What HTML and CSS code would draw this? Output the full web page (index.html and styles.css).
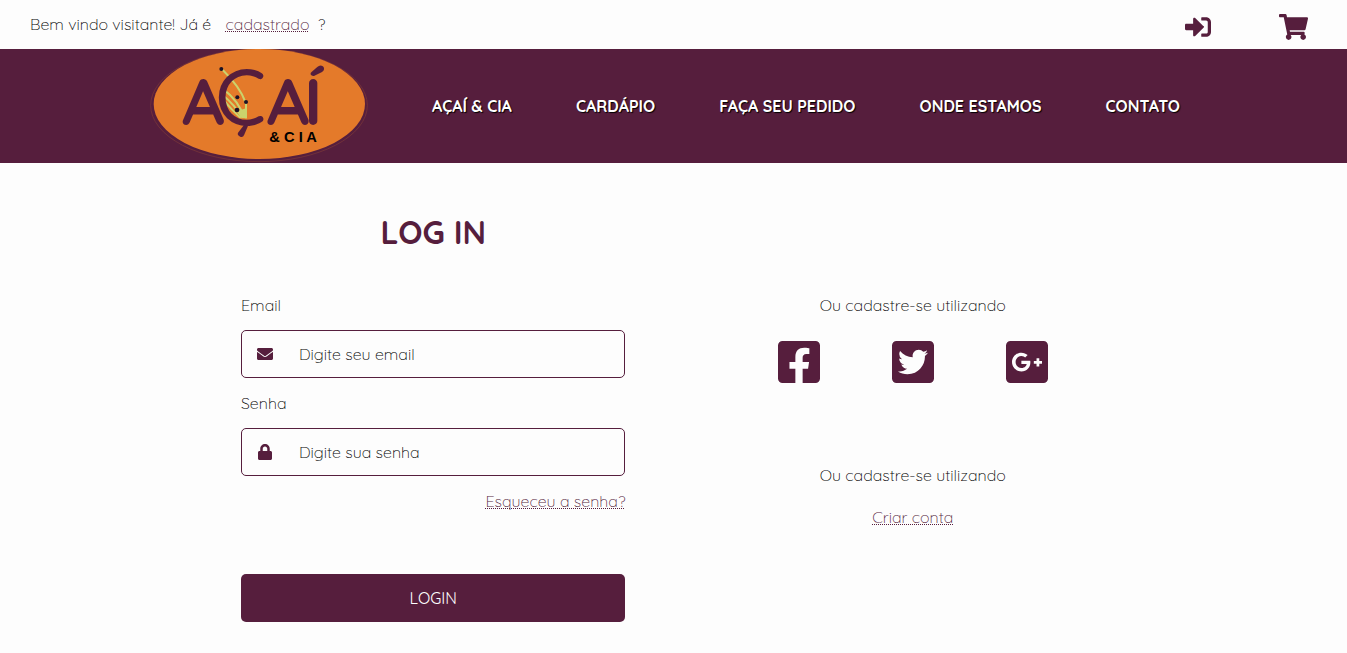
FILE: index.html
```html
<!DOCTYPE html>
<html lang="pt-BR">
<head>
<meta charset="utf-8">
<meta name="viewport" content="width=device-width, initial-scale=1">
<title>Açaí &amp; Cia - Log in</title>
<link rel="stylesheet" href="styles.css">
</head>
<body>
<div class="topbar">
  <p class="welcome">Bem vindo visitante! Já é <a class="link" href="#">cadastrado</a> ?</p>
  <div class="actions">
    <a href="#" aria-label="Entrar"><svg class="icon" viewBox="0 0 512 512"><path d="M416 448h-84c-6.600 0-12-5.400-12-12v-40c0-6.600 5.400-12 12-12h84c17.700 0 32-14.300 32-32V160c0-17.700-14.300-32-32-32h-84c-6.600 0-12-5.400-12-12V76c0-6.600 5.400-12 12-12h84c53 0 96 43 96 96v192c0 53-43 96-96 96zm-47-201L201 79c-15-15-41-4.500-41 17v96H24c-13.300 0-24 10.700-24 24v80c0 13.300 10.700 24 24 24h136v96c0 21.500 26 32 41 17l168-168c9.300-9.400 9.300-24.600 0-34z"/></svg></a>
    <a href="#" aria-label="Carrinho"><svg class="icon icon-cart" viewBox="0 0 576 512"><path d="M528.120 301.319l47.273-208C578.806 78.301 567.391 64 551.990 64H159.208l-9.166-44.810C147.758 8.021 137.930 0 126.529 0H24C10.745 0 0 10.745 0 24v16c0 13.255 10.745 24 24 24h69.883l70.248 343.435C147.325 417.100 136 435.222 136 456c0 30.928 25.072 56 56 56s56-25.072 56-56c0-15.674-6.447-29.835-16.824-40h209.647C430.447 426.165 424 440.326 424 456c0 30.928 25.072 56 56 56s56-25.072 56-56c0-22.172-12.888-41.332-31.579-50.405l5.517-24.276c3.413-15.018-8.002-29.319-23.403-29.319H218.117l-6.545-32h293.145c11.206 0 20.920-7.754 23.403-18.681z"/></svg></a>
  </div>
</div>
<header class="header">
  <div class="header-inner">
    <a class="brand" href="#" aria-label="Açaí &amp; Cia">
      <svg class="logo" viewBox="30 27 654 342">
        <ellipse class="logo-ring" cx="357" cy="196" rx="325" ry="169"/>
        <ellipse class="logo-oval" cx="358" cy="192" rx="317" ry="165"/>
        <path class="logo-strands" d="M246 88Q300 140 318 190V234M247 145Q300 185 312 234M247 164Q285 195 308 234M252 182Q275 210 302 234"/>
        <path class="logo-leaf" d="M290 214L318 205L320 236Q302 236 290 214Z"/>
        <text class="logo-name" y="256"><tspan x="126">A</tspan><tspan class="logo-c" x="226" y="254">Ç</tspan><tspan x="380" y="256">A</tspan><tspan x="492">Í</tspan></text>
        <g class="logo-dots"><circle cx="244" cy="87" r="6"/><circle cx="292" cy="172" r="6"/><circle cx="318" cy="186" r="6"/><circle cx="291" cy="210" r="7"/></g>
        <text class="logo-sub" x="388" y="306">&amp; C I A</text>
      </svg>
    </a>
    <nav class="nav">
      <a href="#">AÇAÍ &amp; CIA</a>
      <a href="#">CARDÁPIO</a>
      <a href="#">FAÇA SEU PEDIDO</a>
      <a href="#">ONDE ESTAMOS</a>
      <a href="#">CONTATO</a>
    </nav>
  </div>
</header>
<main class="main">
  <form class="login">
    <h1 class="title">LOG IN</h1>
    <label for="email">Email</label>
    <div class="field">
      <svg class="field-icon" viewBox="0 0 512 512"><path d="M502.300 190.800c3.900-3.100 9.700-.2 9.700 4.700V400c0 26.500-21.500 48-48 48H48c-26.500 0-48-21.500-48-48V195.600c0-5 5.700-7.800 9.700-4.700 22.400 17.400 52.100 39.500 154.100 113.600 21.100 15.400 56.700 47.800 92.200 47.600 35.700.3 72-32.800 92.300-47.600 102-74.100 131.600-96.300 154-113.700zM256 320c23.200.4 56.600-29.200 73.400-41.400 132.700-96.300 142.800-104.700 173.400-128.700 5.800-4.500 9.200-11.500 9.200-18.900v-19c0-26.500-21.500-48-48-48H48c-26.500 0-48 21.500-48 48v19c0 7.400 3.400 14.300 9.200 18.900 30.600 23.900 40.700 32.400 173.400 128.700 16.800 12.200 50.200 41.800 73.400 41.400z"/></svg>
      <input id="email" type="email" placeholder="Digite seu email">
    </div>
    <label for="senha">Senha</label>
    <div class="field">
      <svg class="field-icon" viewBox="0 0 448 512"><path d="M400 224h-24v-72C376 68.200 307.800 0 224 0S72 68.200 72 152v72H48c-26.500 0-48 21.500-48 48v192c0 26.500 21.500 48 48 48h352c26.500 0 48-21.500 48-48V272c0-26.500-21.500-48-48-48zm-104 0H152v-72c0-39.700 32.300-72 72-72s72 32.300 72 72v72z"/></svg>
      <input id="senha" type="password" placeholder="Digite sua senha">
    </div>
    <a class="link forgot" href="#">Esqueceu a senha?</a>
    <button class="submit" type="submit">LOGIN</button>
  </form>
  <section class="signup">
    <p>Ou cadastre-se utilizando</p>
    <div class="social">
      <a href="#" aria-label="Facebook"><svg viewBox="0 32 448 448"><path d="M400 32H48A48 48 0 0 0 0 80v352a48 48 0 0 0 48 48h137.250V327.690h-63V256h63v-54.640c0-62.150 37-96.480 93.670-96.480 27.140 0 55.520 4.840 55.520 4.840v61h-31.270c-30.810 0-40.420 19.120-40.420 38.730V256h68.780l-11 71.690h-57.780V480H400a48 48 0 0 0 48-48V80a48 48 0 0 0-48-48z"/></svg></a>
      <a href="#" aria-label="Twitter"><svg viewBox="0 32 448 448"><path d="M400 32H48C21.500 32 0 53.500 0 80v352c0 26.500 21.500 48 48 48h352c26.500 0 48-21.500 48-48V80c0-26.500-21.500-48-48-48zm-48.900 158.800c.2 2.800.2 5.700.2 8.500 0 86.700-66 186.600-186.600 186.600-37.200 0-71.700-10.800-100.700-29.400 5.300.6 10.400.8 15.800.8 30.700 0 58.900-10.400 81.400-28-28.800-.6-53-19.500-61.300-45.500 10.100 1.500 19.200 1.500 29.600-1.200-30-6.100-52.500-32.500-52.500-64.400v-.8c8.700 4.900 18.900 7.900 29.600 8.300a65.447 65.447 0 0 1-29.200-54.600c0-12.200 3.200-23.400 8.900-33.100 32.300 39.800 80.800 65.800 135.200 68.600-9.300-44.500 24-80.600 64-80.600 18.900 0 35.900 7.900 47.900 20.700 14.800-2.800 29-8.300 41.600-15.800-4.900 15.200-15.200 28-28.800 36.100 13.200-1.400 26-5.100 37.800-10.200-8.900 13.100-20.100 24.700-32.900 34z"/></svg></a>
      <a href="#" aria-label="Google Plus"><svg viewBox="0 32 448 448"><path d="M400 32H48C21.500 32 0 53.500 0 80v352c0 26.500 21.500 48 48 48h352c26.500 0 48-21.500 48-48V80c0-26.500-21.500-48-48-48zM164 356c-55.300 0-100-44.700-100-100s44.700-100 100-100c27 0 49.500 9.800 67 26.200l-27.100 26.100c-7.400-7.100-20.300-15.400-39.800-15.400-34.100 0-61.900 28.200-61.900 63.200 0 34.900 27.800 63.200 61.900 63.200 39.600 0 54.400-28.500 56.800-43.100H164v-34.400h94.400c1 5 1.600 10.100 1.600 16.600 0 57.100-38.300 97.600-96 97.600zm220-81.800h-29v29h-29.200v-29h-29V245h29v-29H355v29h29v29.200z"/></svg></a>
    </div>
    <p>Ou cadastre-se utilizando</p>
    <a class="link create" href="#">Criar conta</a>
  </section>
</main>
</body>
</html>
```
FILE: styles.css
```css
* { box-sizing: border-box; }

body {
  margin: 0;
  background: #fdfdfd;
  color: #000;
  font: 300 16px/20px Quicksand, Lato, sans-serif;
}

h1, p { margin: 0; }
svg { display: block; fill: #561e3d; }

.link {
  color: #561e3d;
  text-decoration: underline dotted 1px;
  text-decoration-skip-ink: none;
  text-underline-offset: 1px;
}

.topbar {
  display: flex;
  align-items: center;
  justify-content: space-between;
  min-height: 49px;
  padding: 0 39px 0 30px;
}
.welcome { padding-bottom: 2px; }
.welcome .link { margin: 0 4px 0 10px; }
.actions {
  display: flex;
  align-items: center;
  gap: 68px;
  padding-top: 5px;
}
.icon { width: 26px; height: 26px; }
.icon-cart { width: 29px; }

.header { background: #561e3d; }
.header-inner {
  display: flex;
  align-items: center;
  gap: 64px;
  max-width: 1047px;
  margin: 0 auto;
}
.logo { width: 218px; height: 114px; }
.logo-ring { fill: none; stroke: #7e3a38; stroke-width: 2; }
.logo-oval { fill: #e47a2a; }
.logo-strands { fill: none; stroke: #cbd36c; stroke-width: 6; }
.logo-leaf { fill: #cbd36c; }
.logo-name {
  font: 700 200px Quicksand, sans-serif;
  fill: #561e3d;
}
.logo-c { font-size: 236px; font-weight: 500; }
.logo-dots { fill: #1b1226; }
.logo-sub { font: 700 44px "Liberation Sans", sans-serif; fill: #000; }

.nav {
  display: flex;
  flex: 1;
  justify-content: space-between;
  padding-right: 17px;
}
.nav a {
  color: #fff;
  font-weight: 700;
  text-decoration: none;
  text-shadow: 1px 1px 1px #000;
}

.main {
  display: grid;
  grid-template-columns: 1fr 1fr;
  max-width: 961px;
  margin: 0 auto;
  padding: 49px 0 32px;
}
.login {
  display: flex;
  flex-direction: column;
  width: 80%;
  margin: 0 auto;
}
.title {
  margin-bottom: 43px;
  color: #561e3d;
  font-size: 32px;
  line-height: 40px;
  font-weight: 700;
  text-align: center;
}
.field {
  display: flex;
  align-items: center;
  gap: 26px;
  height: 48px;
  margin: 15px 0;
  padding: 0 15px;
  border: 1px solid #561e3d;
  border-radius: 5px;
}
.field-icon { flex: none; width: 16px; height: 16px; }
.field input {
  flex: 1;
  min-width: 0;
  padding: 0;
  border: 0;
  outline: 0;
  background: none;
  color: #000;
  font: inherit;
}
.field input::placeholder { color: #000; opacity: 1; }
.forgot { align-self: flex-end; }
.submit {
  height: 48px;
  margin-top: 63px;
  border: 0;
  border-radius: 5px;
  background: #561e3d;
  color: #fff;
  font: inherit;
  font-weight: 400;
}

.signup {
  display: flex;
  flex-direction: column;
  align-items: center;
  padding: 83px 2px 0 0;
}
.social {
  display: flex;
  gap: 72px;
  margin: 26px 0 82px;
}
.social svg { width: 42px; height: 42px; }
.create { margin-top: 22px; }
```
